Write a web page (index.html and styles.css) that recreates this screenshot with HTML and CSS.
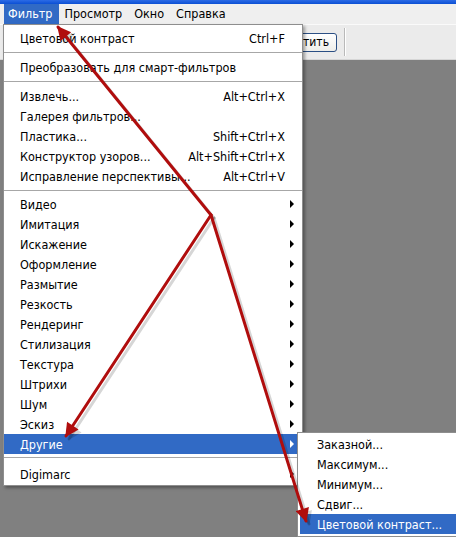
FILE: index.html
```html
<!DOCTYPE html>
<html lang="ru">
<head>
    <meta charset="UTF-8">
    <title>Фильтр</title>
    <link rel="stylesheet" href="styles.css">
</head>
<body>
<div class="titlebar"></div>
<div class="menubar">
    <span class="mb-item open">Фильтр</span>
    <span class="mb-item">Просмотр</span>
    <span class="mb-item">Окно</span>
    <span class="mb-item">Справка</span>
</div>
<div class="toolbar">
    <button class="tb-btn">Очистить</button>
    <span class="tb-sep"></span>
</div>
<div class="workspace"></div>

<ul class="menu">
    <li class="item"><span class="label">Цветовой контраст</span><span class="key">Ctrl+F</span></li>
    <li class="sep sep-a"></li>
    <li class="item"><span class="label">Преобразовать для смарт-фильтров</span></li>
    <li class="sep sep-a"></li>
    <li class="item"><span class="label">Извлечь...</span><span class="key">Alt+Ctrl+X</span></li>
    <li class="item"><span class="label">Галерея фильтров...</span></li>
    <li class="item"><span class="label">Пластика...</span><span class="key">Shift+Ctrl+X</span></li>
    <li class="item"><span class="label">Конструктор узоров...</span><span class="key">Alt+Shift+Ctrl+X</span></li>
    <li class="item"><span class="label">Исправление перспективы...</span><span class="key">Alt+Ctrl+V</span></li>
    <li class="sep sep-b"></li>
    <li class="item sub"><span class="label">Видео</span></li>
    <li class="item sub"><span class="label">Имитация</span></li>
    <li class="item sub"><span class="label">Искажение</span></li>
    <li class="item sub"><span class="label">Оформление</span></li>
    <li class="item sub"><span class="label">Размытие</span></li>
    <li class="item sub"><span class="label">Резкость</span></li>
    <li class="item sub"><span class="label">Рендеринг</span></li>
    <li class="item sub"><span class="label">Стилизация</span></li>
    <li class="item sub"><span class="label">Текстура</span></li>
    <li class="item sub"><span class="label">Штрихи</span></li>
    <li class="item sub"><span class="label">Шум</span></li>
    <li class="item sub"><span class="label">Эскиз</span></li>
    <li class="item sub selected"><span class="label">Другие</span></li>
    <li class="sep sep-c"></li>
    <li class="item sub"><span class="label">Digimarc</span></li>
</ul>

<ul class="menu submenu">
    <li class="item"><span class="label">Заказной...</span></li>
    <li class="item"><span class="label">Максимум...</span></li>
    <li class="item"><span class="label">Минимум...</span></li>
    <li class="item"><span class="label">Сдвиг...</span></li>
    <li class="item selected"><span class="label">Цветовой контраст...</span></li>
</ul>

<!-- red pointer arrows drawn over the screenshot -->
<svg class="arrows" width="456" height="537" viewBox="0 0 456 537">
    <defs>
        <marker id="head" viewBox="0 0 10 10" refX="9" refY="5" markerWidth="5.5" markerHeight="4.6" orient="auto" markerUnits="strokeWidth">
            <path d="M0 0 L10 5 L0 10 Z" fill="#b00d0d"/>
        </marker>
        <marker id="head-shadow" viewBox="0 0 10 10" refX="9" refY="5" markerWidth="5.5" markerHeight="4.6" orient="auto" markerUnits="strokeWidth">
            <path d="M0 0 L10 5 L0 10 Z" fill="rgba(0,0,0,0.16)"/>
        </marker>
    </defs>
    <g class="shadow" transform="translate(3 3)">
        <line x1="211" y1="215" x2="58" y2="27" marker-end="url(#head-shadow)"/>
        <line x1="211" y1="215" x2="66" y2="436" marker-end="url(#head-shadow)"/>
        <line x1="211" y1="215" x2="306" y2="521" marker-end="url(#head-shadow)"/>
    </g>
    <g class="stroke">
        <line x1="211" y1="215" x2="58" y2="27" marker-end="url(#head)"/>
        <line x1="211" y1="215" x2="66" y2="436" marker-end="url(#head)"/>
        <line x1="211" y1="215" x2="306" y2="521" marker-end="url(#head)"/>
    </g>
</svg>
</body>
</html>
```

FILE: styles.css
```css
html {
    overflow: hidden;
}
body {
    margin: 0;
    width: 456px;
    height: 537px;
    overflow: hidden;
    position: relative;
    background-color: #808080;
    font-family: "DejaVu Sans Condensed", "DejaVu Sans", sans-serif;
    font-size: 12.5px;
    color: #000;
}
.titlebar {
    height: 4px;
    background: linear-gradient(#2c6be6, #0b4fd4);
}
.menubar {
    display: flex;
    height: 20px;
    padding-left: 4px;
    background-color: #efefef;
    border-bottom: 1px solid #fafafa;
}
.mb-item {
    padding: 0 6px 0 4px;
    margin-right: 2px;
    line-height: 20px;
}
.mb-item.open {
    background-color: #316ac5;
    color: #fff;
}
.toolbar {
    display: flex;
    align-items: center;
    height: 34px;
    background-color: #ebebeb;
    border-bottom: 1px solid #d6d6d6;
}
.tb-btn {
    margin-left: 252px;
    width: 85px;
    height: 19px;
    padding: 0 7px;
    font-family: inherit;
    font-size: 12px;
    text-align: right;
    background: linear-gradient(#ffffff, #eeeeea);
    border: 1px solid #2b4f84;
    border-radius: 3px;
}
.tb-sep {
    width: 1px;
    height: 28px;
    margin-left: 7px;
    background-color: #b9b9b9;
    border-right: 1px solid #fff;
}
.menu {
    position: absolute;
    left: 3px;
    top: 24px;
    width: 298px;
    margin: 0;
    padding: 3px 0 1px;
    list-style: none;
    background-color: #fff;
    border: 1px solid #8e8e8e;
    box-shadow: 2px 2px 3px rgba(0, 0, 0, 0.35);
}
.item {
    position: relative;
    display: flex;
    align-items: center;
    height: 20px;
    padding: 0 17px 0 16px;
}
.item .label {
    flex: 1;
    white-space: nowrap;
}
.item .key {
    white-space: nowrap;
}
.item.sub::after {
    content: "";
    position: absolute;
    right: 8px;
    top: 6px;
    border-left: 4px solid #000;
    border-top: 4px solid transparent;
    border-bottom: 4px solid transparent;
}
.item.selected {
    background-color: #316ac5;
    color: #fff;
}
.item.selected.sub::after {
    border-left-color: #fff;
}
.sep {
    position: relative;
}
.sep::before {
    content: "";
    position: absolute;
    left: 0;
    right: 0;
    top: 4px;
    border-top: 1px solid #a7a7a7;
}
.sep-a {
    height: 9px;
}
.sep-b {
    height: 8px;
}
.sep-c {
    height: 10px;
}
.sep-c::before {
    top: 3px;
}
.submenu {
    left: 297px;
    top: 432px;
    width: 158px;
    padding: 1px 0 2px;
    border-right: none;
}
.submenu .item {
    padding-left: 19px;
}
.submenu .item.selected {
    margin-left: 2px;
    padding-left: 17px;
}
.arrows {
    position: absolute;
    left: 0;
    top: 0;
    pointer-events: none;
}
.arrows line {
    stroke-width: 3;
    stroke-linecap: round;
}
.arrows .stroke line {
    stroke: #b00d0d;
}
.arrows .shadow line {
    stroke: rgba(0, 0, 0, 0.16);
}
```
